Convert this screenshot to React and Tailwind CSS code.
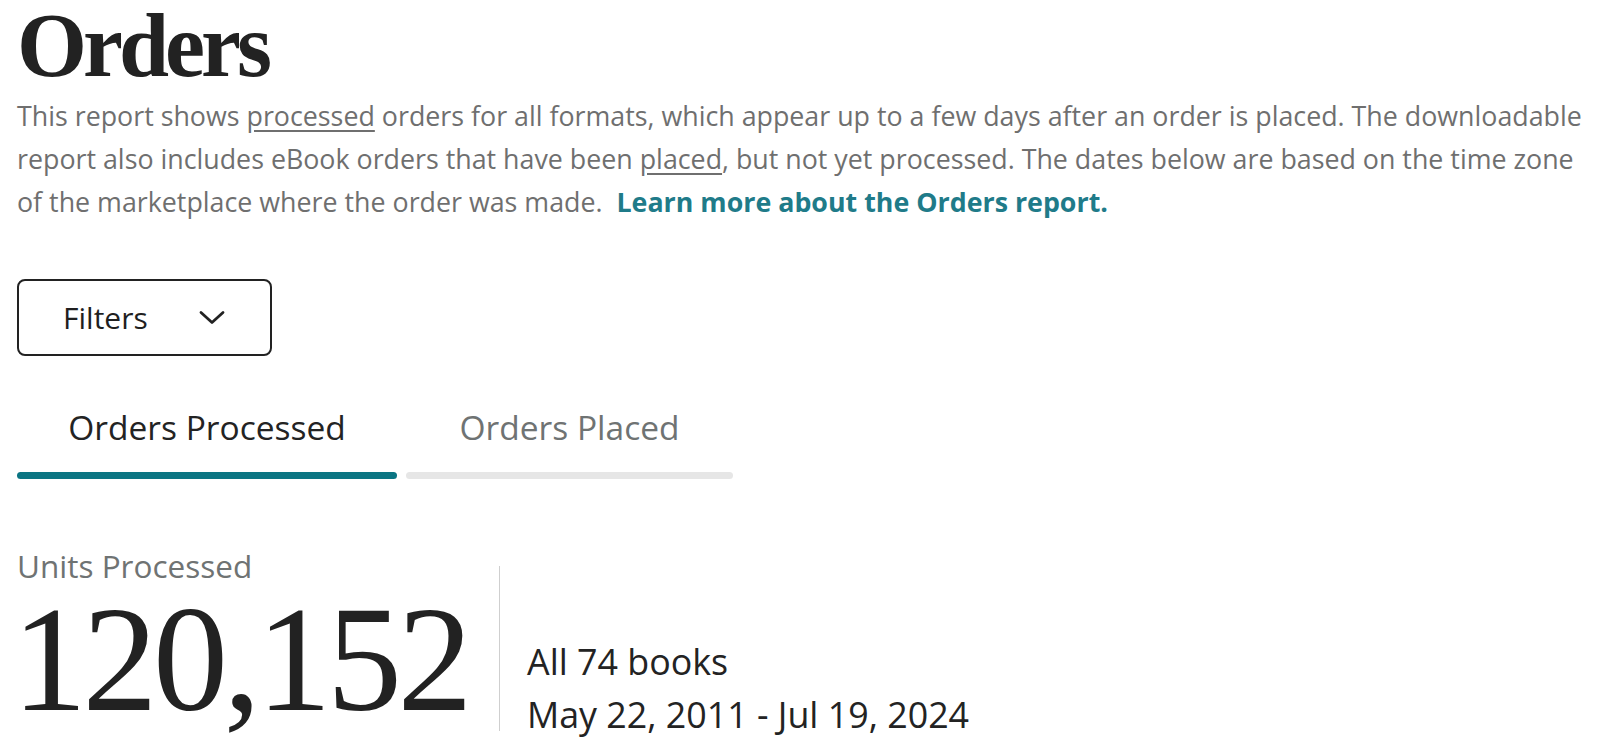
const sans = "font-['Open_Sans',sans-serif]";
const serif = "font-['Liberation_Serif',serif]";

function Tab({ label, active, width }) {
  return (
    <button className={`flex flex-col items-center ${width}`}>
      <span className={`text-[33.5px] leading-[40px] ${active ? "text-[#232323]" : "text-[#6f7373]"}`}>{label}</span>
      <span className={`mt-[25px] h-[7px] w-full rounded-full ${active ? "bg-[#0b7583]" : "bg-[#e6e6e6]"}`} />
    </button>
  );
}

export default function App() {
  return (
    <div className={`bg-white min-h-screen px-[17px] ${sans}`}>
      <h1 className={`${serif} font-bold text-[90px] leading-[92px] tracking-[-4px] text-[#222]`}>Orders</h1>

      <p className="mt-[2px] text-[26.8px] leading-[43px] text-[#6f6f6f]">
        This report shows <span className="underline underline-offset-4">processed</span> orders for all formats, which appear up to a few days after an order is placed. The downloadable report also includes eBook orders that have been <span className="underline underline-offset-4">placed</span>, but not yet processed. The dates below are based on the time zone of the marketplace where the order was made.{"\u00a0 "}
        <a href="#" className="font-bold text-[#1f7b89]">Learn more about the Orders report.</a>
      </p>

      <button className="mt-[56px] flex h-[77px] w-[255px] items-center justify-between rounded-lg border-2 border-[#222] pl-[44px] pr-[45px] text-[30px] text-[#1f1f1f]">
        <span>Filters</span>
        <svg width="26" height="15" viewBox="0 0 26 15" fill="none" className="text-[#222]">
          <path d="M2 2.5 13 12.5 24 2.5" stroke="currentColor" strokeWidth="2.8" strokeLinecap="round" strokeLinejoin="round" />
        </svg>
      </button>

      <div className="mt-[51px] flex gap-[9px]">
        <Tab label="Orders Processed" active width="w-[380px]" />
        <Tab label="Orders Placed" width="w-[327px]" />
      </div>

      <div className="mt-[67px] flex items-start">
        <div>
          <div className="text-[31.5px] leading-[40px] text-[#6f7373]">Units Processed</div>
          <div className={`${serif} -mt-[2px] -ml-[5px] text-[150px] leading-none tracking-[-4.5px] text-[#222]`}>120,152</div>
        </div>
        <div className="ml-[31px] mt-[20px] h-[165px] w-px bg-[#cfcfcf]" />
        <div className="ml-[27px] mt-[89px] text-[35.8px] leading-[53px] text-[#232323]">
          <div>All 74 books</div>
          <div>May 22, 2011 - Jul 19, 2024</div>
        </div>
      </div>
    </div>
  );
}
